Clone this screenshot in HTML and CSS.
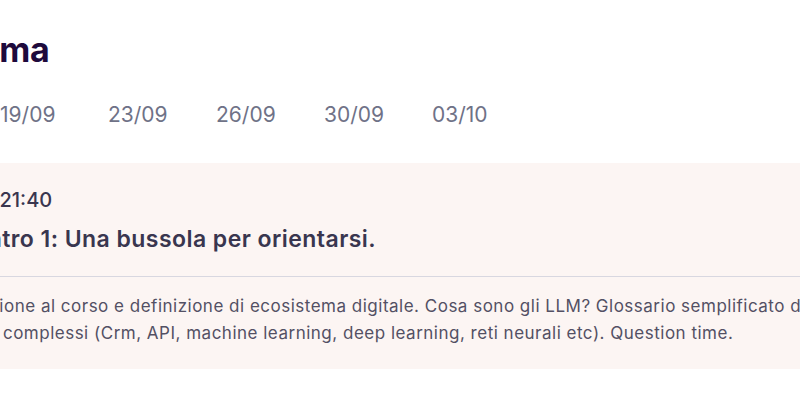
FILE: index.html
```html
<!DOCTYPE html>
<html lang="it">
<head>
<meta charset="utf-8">
<title>Programma</title>
<link rel="stylesheet" href="styles.css">
</head>
<body>
<main class="page">
  <h2 class="heading">Programma</h2>
  <nav class="dates">
    <span class="date">16/09</span>
    <span class="date">19/09</span>
    <span class="date">23/09</span>
    <span class="date">26/09</span>
    <span class="date">30/09</span>
    <span class="date">03/10</span>
  </nav>
  <section class="panel">
    <div class="panel-inner">
      <div class="time">19:00-21:40</div>
      <h3 class="title">Incontro 1: Una bussola per orientarsi.</h3>
      <hr class="divider">
      <p class="desc">Introduzione al corso e definizione di ecosistema digitale. Cosa sono gli LLM? Glossario semplificato dei <span class="wide">termini </span>complessi (Crm, API, machine learning, deep learning, reti neurali etc). Question time.</p>
    </div>
  </section>
</main>
</body>
</html>
```

FILE: styles.css
```css
html, body {
  margin: 0;
  padding: 0;
  background: #ffffff;
  overflow: hidden;
}
body {
  font-family: Inter, "Noto Sans", "Liberation Sans", sans-serif;
  width: 800px;
  height: 400px;
}
.page {
  margin-left: -141px;
  width: 1200px;
  padding-top: 30px;
}
.heading {
  margin: 0;
  font-size: 34px;
  line-height: 40px;
  font-weight: 700;
  color: #1e0a3c;
  letter-spacing: -0.2px;
}
.dates {
  display: flex;
  gap: 52px;
  margin-top: 33px;
  padding-left: 33px;
}
.date {
  font-size: 21px;
  line-height: 24px;
  color: #6f7287;
  width: 56px;
  white-space: nowrap;
}
.panel {
  margin-top: 36px;
  background: #fcf5f3;
  padding: 25px 0 22px 79px;
}
.panel-inner {
  width: 1000px;
}
.time {
  font-size: 20px;
  line-height: 24px;
  font-weight: 500;
  color: #39364f;
}
.title {
  margin: 12px 0 0;
  font-size: 23px;
  line-height: 30px;
  font-weight: 600;
  letter-spacing: 0.45px;
  color: #39364f;
}
.divider {
  margin: 22px 0 0;
  border: 0;
  border-top: 1px solid #d8d7e0;
  height: 0;
}
.desc {
  margin: 16px 0 0 -9px;
  font-size: 17px;
  line-height: 27px;
  letter-spacing: 0.5px;
  color: #535064;
  max-width: 920px;
}
.wide {
  letter-spacing: 1.75px;
}
```
